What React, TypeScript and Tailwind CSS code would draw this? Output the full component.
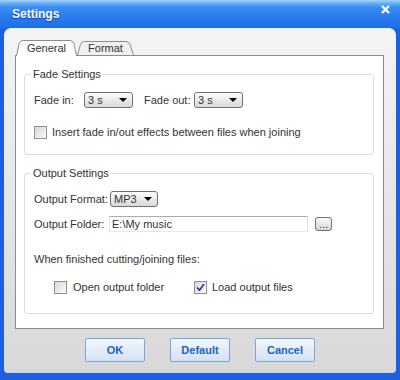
import React from "react";

function Combo({ value, width }: { value: string; width: string }) {
  return (
    <div
      className={
        width +
        " h-[16px] flex items-center justify-between pl-[3px] pr-[5px] border border-[#707070] rounded-[3px] bg-gradient-to-b from-[#fdfdfd] to-[#d9d9d9]"
      }
    >
      <span>{value}</span>
      <svg width="8" height="4" viewBox="0 0 8 4">
        <polygon points="0,0 8,0 4,4" fill="#000" />
      </svg>
    </div>
  );
}

function Check({ checked }: { checked?: boolean }) {
  return (
    <span className="w-[13px] h-[13px] shrink-0 border border-[#8e8f8f] bg-gradient-to-br from-[#d6d6d6] to-[#fdfdfd] flex items-center justify-center">
      {checked && (
        <svg width="9" height="9" viewBox="0 0 9 9">
          <path d="M1 4.5 L3.5 7.2 L8 1.2" stroke="#21408f" strokeWidth="1.8" fill="none" />
        </svg>
      )}
    </span>
  );
}

function Btn({ label }: { label: string }) {
  return (
    <div className="w-[60px] h-[24px] flex items-center justify-center border border-[#78a6e0] rounded-[2px] bg-gradient-to-b from-[#f2f7fc] to-[#d3e2f2] text-[#1f5fc8] font-bold">
      {label}
    </div>
  );
}

export default function App() {
  return (
    <div className="w-[400px] h-[380px] flex flex-col bg-[#1c60e0] font-['Liberation_Sans',Arial,sans-serif] text-[11px] leading-[13px] text-[#333]">
      {/* title bar */}
      <div className="h-[28px] shrink-0 flex justify-between bg-[linear-gradient(to_bottom,#a9d6fb_0px,#6cb2f7_3px,#3b8ff2_7px,#2c80f0_14px,#1f6ee8_28px)]">
        <span className="pl-[12px] self-center text-white font-bold text-[12px] [text-shadow:0_1px_1px_#0b3fa8]">
          Settings
        </span>
        <svg className="mt-[5px] mr-[10px]" width="9" height="9" viewBox="0 0 9 9">
          <path d="M1 1 L8 8 M8 1 L1 8" stroke="#fff" strokeWidth="2.4" />
        </svg>
      </div>

      {/* body */}
      <div className="mx-[4px] h-[345px] rounded-t-[7px] rounded-b-[4px] bg-gradient-to-b from-[#f4f4f4] to-[#d8d8d8] pt-[12px] pl-[11px]">
        <div className="flex items-end h-[16px] -mb-px ml-[1px] relative z-10">
          <div className="relative w-[61px] h-[16px] flex items-center justify-center">
            <svg className="absolute inset-0" width="61" height="16" viewBox="0 0 61 16">
              <path d="M0.5 16 L3 4 Q4 0.5 7 0.5 L54 0.5 Q57 0.5 58 4 L60.5 16" fill="#fff" stroke="#898c95" />
            </svg>
            <span className="relative">General</span>
          </div>
          <div className="relative w-[57px] h-[14px] mb-[1px] flex items-center justify-center">
            <svg className="absolute inset-0" width="57" height="14" viewBox="0 0 57 14">
              <path d="M0.5 14 L3.5 3.5 Q4.5 0.5 7.5 0.5 L49 0.5 Q52 0.5 53 3.5 L56.5 14" fill="#f0f0f0" stroke="#898c95" />
            </svg>
            <span className="relative pt-[1px]">Format</span>
          </div>
        </div>

        <div className="w-[369px] h-[274px] border border-[#898c95] bg-white">
          <fieldset className="ml-[8px] w-[350px] mt-[12px] border border-[#d5dfe5] rounded-[3px] px-[9px] pt-[11px] pb-[15px]">
            <legend className="-ml-[3px] px-[2px] leading-[13px]">Fade Settings</legend>
            <div className="flex items-center h-[16px]">
              <span className="w-[50px]">Fade in:</span>
              <Combo value="3 s" width="w-[49px]" />
              <span className="ml-[11px] w-[50px]">Fade out:</span>
              <Combo value="3 s" width="w-[49px]" />
            </div>
            <div className="mt-[18px] flex items-center gap-[5px]">
              <Check />
              <span>Insert fade in/out effects between files when joining</span>
            </div>
          </fieldset>

          <fieldset className="ml-[8px] w-[350px] mt-[12px] border border-[#d5dfe5] rounded-[3px] px-[9px] pt-[11px] pb-[19px]">
            <legend className="-ml-[3px] px-[2px] leading-[13px]">Output Settings</legend>
            <div className="flex items-center h-[16px]">
              <span className="w-[76px]">Output Format:</span>
              <Combo value="MP3" width="w-[48px]" />
            </div>
            <div className="mt-[9px] flex items-center h-[16px]">
              <span className="w-[75px]">Output Folder:</span>
              <div className="w-[199px] h-[16px] flex items-center pl-[2px] border border-[#abadb3] border-l-[#e2e3ea] border-r-[#dbdfe6] border-b-[#e3e9ef]">
                {"E:\\My music"}
              </div>
              <div className="ml-[7px] w-[17px] h-[14px] flex items-end justify-center pb-[1px] border border-[#707070] rounded-[3px] bg-gradient-to-b from-[#fafafa] to-[#d6d6d6] text-[#4a3a8a] leading-[10px]">
                ...
              </div>
            </div>
            <div className="mt-[21px]">When finished cutting/joining files:</div>
            <div className="mt-[15px] flex items-center pl-[20px]">
              <div className="w-[140px] flex items-center gap-[6px]">
                <Check />
                <span>Open output folder</span>
              </div>
              <div className="flex items-center gap-[5px]">
                <Check checked />
                <span>Load output files</span>
              </div>
            </div>
          </fieldset>
        </div>

        <div className="mt-[9px] flex justify-center gap-[25px] -ml-[11px]">
          <Btn label="OK" />
          <Btn label="Default" />
          <Btn label="Cancel" />
        </div>
      </div>
    </div>
  );
}
